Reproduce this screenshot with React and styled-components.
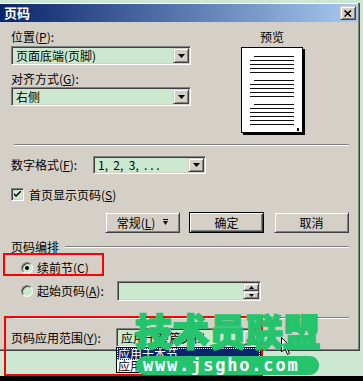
import styled, { createGlobalStyle, css } from "styled-components";

const FIELD = "#cce8cf";

const GlobalStyle = createGlobalStyle`
  html, body {
    margin: 0;
    padding: 0;
  }
  body {
    width: 363px;
    height: 381px;
    overflow: hidden;
    background: #cde8d2;
    font-family: "Noto Sans CJK SC", "Noto Sans", sans-serif;
    font-size: 12px;
    color: #000;
  }
`;

const raised = css`
  box-sizing: border-box;
  background: #d4d0c8;
  border: 1px solid;
  border-color: #d4d0c8 #404040 #404040 #d4d0c8;
  box-shadow: inset 1px 1px #fff, inset -1px -1px #808080;
`;

const sunken = css`
  box-sizing: border-box;
  border: 1px solid;
  border-color: #808080 #fff #fff #808080;
  box-shadow: inset 1px 1px #404040, inset -1px -1px #d4d0c8;
`;

const Page = styled.div`
  position: relative;
  width: 363px;
  height: 381px;
  box-sizing: border-box;
  padding-top: 3px;
  display: flex;
  flex-direction: column;
  background: #cde8d2;
`;

const Dialog = styled.div`
  width: 360px;
  height: 348px;
  box-sizing: border-box;
  padding: 1px 2px 2px 0;
  background: #d4d0c8;
  box-shadow: inset -1px -1px #404040, inset -2px -2px #808080, inset 0 1px #fff;
`;

const TitleBar = styled.div`
  height: 18px;
  display: flex;
  align-items: center;
  padding-left: 4px;
  background: linear-gradient(to right, #0a246a, #a6caf0);
  color: #fff;
  font-weight: bold;
  font-size: 13px;
  line-height: 14px;
`;

const CloseButton = styled.div`
  ${raised};
  margin-left: auto;
  margin-right: 2px;
  width: 16px;
  height: 14px;
  display: flex;
  align-items: center;
  justify-content: center;
`;

const Body = styled.div`
  padding: 0 9px 0 11px;
`;

const TopSection = styled.div`
  height: 122px;
  display: flex;
`;

const LeftCol = styled.div`
  width: 180px;
  display: flex;
  flex-direction: column;
`;

const Label = styled.span`
  display: block;
  height: 14px;
  line-height: 14px;
  white-space: nowrap;
  margin-top: ${(p) => p.$mt || 0}px;
  width: ${(p) => (p.$w ? `${p.$w}px` : "auto")};
  flex-shrink: 0;
`;

const Field = styled.div`
  ${sunken};
  width: ${(p) => p.$w}px;
  height: ${(p) => p.$h || 19}px;
  margin-top: ${(p) => p.$mt || 0}px;
  padding: 1px;
  display: flex;
  background: ${FIELD};
  flex-shrink: 0;
`;

const FieldText = styled.span`
  flex: 1;
  padding-left: 3px;
  display: flex;
  align-items: center;
  white-space: pre;
  overflow: hidden;
  line-height: 14px;
`;

const DropButton = styled.div`
  ${raised};
  width: 16px;
  display: flex;
  align-items: center;
  justify-content: center;
`;

const SpinBox = styled.div`
  width: 16px;
  display: flex;
  flex-direction: column;
`;

const SpinButton = styled.div`
  ${raised};
  flex: 1;
  display: flex;
  align-items: center;
  justify-content: center;
`;

const PreviewCol = styled.div`
  margin-left: 50px;
  display: flex;
  flex-direction: column;
`;

const PreviewLabel = styled(Label)`
  width: 62px;
  text-align: center;
`;

const PreviewPage = styled.div`
  position: relative;
  margin-top: 3px;
  width: 62px;
  height: 86px;
  box-sizing: border-box;
  background: #fff;
  border: 1px solid #000;
  box-shadow: 2px 2px 0 #000;
  padding: 8px 0 0 8px;
  display: flex;
  flex-direction: column;
  gap: 7px;
`;

const Paragraph = styled.div`
  display: flex;
  flex-direction: column;
  gap: 3px;
`;

const TextLine = styled.div`
  height: 1px;
  background: #111;
  width: ${(p) => (p.$first ? 40 : 44)}px;
  margin-left: ${(p) => (p.$first ? 4 : 0)}px;
`;

const PageNumber = styled.div`
  position: absolute;
  left: 55px;
  top: 80px;
  width: 2px;
  height: 3px;
  background: #000;
`;

const Separator = styled.div`
  margin-left: 3px;
  margin-top: ${(p) => p.$mt || 0}px;
  height: 0;
  border-top: 1px solid #808080;
  border-bottom: 1px solid #fff;
`;

const Row = styled.div`
  display: flex;
  align-items: center;
  margin-top: ${(p) => p.$mt || 0}px;
  height: ${(p) => p.$h}px;
  padding-left: ${(p) => p.$pl || 0}px;
  gap: ${(p) => p.$gap || 0}px;
`;

const Checkbox = styled.div`
  ${sunken};
  width: 13px;
  height: 13px;
  background: ${FIELD};
  display: flex;
  align-items: center;
  justify-content: center;
`;

const Radio = styled.div`
  box-sizing: border-box;
  width: 12px;
  height: 12px;
  border-radius: 50%;
  border: 1px solid;
  border-color: #808080 #fff #fff #808080;
  box-shadow: inset 1px 1px #404040;
  background: ${FIELD};
  display: flex;
  align-items: center;
  justify-content: center;
  flex-shrink: 0;
`;

const RadioDot = styled.div`
  width: 4px;
  height: 4px;
  border-radius: 50%;
  background: #000;
`;

const ButtonRow = styled.div`
  display: flex;
  justify-content: flex-end;
  margin-top: 11px;
  height: 21px;
`;

const Button = styled.div`
  ${raised};
  width: 75px;
  height: 21px;
  margin-left: ${(p) => p.$ml || 0}px;
  display: flex;
  align-items: center;
  justify-content: center;
  gap: 8px;
  line-height: 14px;
  ${(p) =>
    p.$default &&
    css`
      border: 1px solid #000;
      box-shadow: inset 1px 1px #fff, inset -1px -1px #404040, inset -2px -2px #808080;
    `}
`;

const GroupHeader = styled.div`
  display: flex;
  align-items: center;
  margin-top: 7px;
  height: 14px;
`;

const GroupRule = styled.div`
  flex: 1;
  margin-left: 6px;
  height: 0;
  border-top: 1px solid #808080;
  border-bottom: 1px solid #fff;
`;

const Spacer = styled.div`
  flex: 1;
`;

const BottomBar = styled.div`
  height: 5px;
  background: #000;
`;

const DropList = styled.div`
  position: absolute;
  left: 116px;
  top: 347px;
  width: 145px;
  height: 26px;
  box-sizing: border-box;
  border: 1px solid #000;
  background: #fff;
  display: flex;
  flex-direction: column;
`;

const ListItem = styled.div`
  height: 12px;
  line-height: 12px;
  padding-left: 1px;
  white-space: nowrap;
  box-sizing: border-box;
  ${(p) =>
    p.$selected &&
    css`
      background: #0a246a;
      color: #fff;
      outline: 1px dotted #fff;
      outline-offset: -1px;
    `}
`;

const Highlight = styled.div`
  position: absolute;
  left: ${(p) => p.$x}px;
  top: ${(p) => p.$y}px;
  width: ${(p) => p.$w}px;
  height: ${(p) => p.$h}px;
  box-sizing: border-box;
  border: 2px solid #ff0000;
`;

const Cursor = styled.svg`
  position: absolute;
  left: 281px;
  top: 337px;
`;

const Watermark = styled.div`
  position: absolute;
  left: 135px;
  top: 309px;
  font-family: "Noto Sans CJK SC", sans-serif;
  font-weight: 900;
  font-size: 37px;
  line-height: 42px;
  color: #25c46c;
  -webkit-text-stroke: 1.6px #25c46c;
  white-space: nowrap;
`;

const WatermarkPill = styled.div`
  position: absolute;
  left: 136px;
  top: 356px;
  width: 183px;
  height: 19px;
  border-radius: 9px;
  background: #25c46c;
  color: #fff;
  font-family: "DejaVu Sans Mono", monospace;
  font-weight: bold;
  font-size: 17px;
  line-height: 19px;
  letter-spacing: 1.8px;
  padding-left: 7px;
  box-sizing: border-box;
  white-space: nowrap;
`;

const Arrow = () => (
  <svg width="7" height="4" viewBox="0 0 7 4">
    <polygon points="0,0 7,0 3.5,4" fill="#000" />
  </svg>
);

const SmallArrow = ({ up }) => (
  <svg width="5" height="3" viewBox="0 0 5 3">
    <polygon points={up ? "2.5,0 5,3 0,3" : "0,0 5,0 2.5,3"} fill="#000" />
  </svg>
);

const paragraphs = [5, 5, 6];

export default function App() {
  return (
    <>
      <GlobalStyle />
      <Page>
        <Dialog>
          <TitleBar>
            页码
            <CloseButton>
              <svg width="8" height="7" viewBox="0 0 8 7">
                <path d="M0.5 0.5 L7 6.5 M7 0.5 L0.5 6.5" stroke="#000" strokeWidth="1.5" />
              </svg>
            </CloseButton>
          </TitleBar>
          <Body>
            <TopSection>
              <LeftCol>
                <Label $mt={8}>
                  位置(<u>P</u>):
                </Label>
                <Field $w={180} $mt={2}>
                  <FieldText>页面底端(页脚)</FieldText>
                  <DropButton>
                    <Arrow />
                  </DropButton>
                </Field>
                <Label $mt={7}>
                  对齐方式(<u>G</u>):
                </Label>
                <Field $w={180} $mt={1}>
                  <FieldText>右侧</FieldText>
                  <DropButton>
                    <Arrow />
                  </DropButton>
                </Field>
              </LeftCol>
              <PreviewCol>
                <PreviewLabel $mt={8}>预览</PreviewLabel>
                <PreviewPage>
                  {paragraphs.map((n, i) => (
                    <Paragraph key={i}>
                      {Array.from({ length: n }).map((_, j) => (
                        <TextLine key={j} $first={j === 0} />
                      ))}
                    </Paragraph>
                  ))}
                  <PageNumber />
                </PreviewPage>
              </PreviewCol>
            </TopSection>

            <Separator />

            <Row $mt={10} $h={18}>
              <Label $w={82}>
                数字格式(<u>F</u>):
              </Label>
              <Field $w={113} $h={18}>
                <FieldText>{"1,  2,  3,  . . ."}</FieldText>
                <DropButton>
                  <Arrow />
                </DropButton>
              </Field>
            </Row>

            <Row $mt={14} $h={13} $gap={5}>
              <Checkbox>
                <svg width="7" height="7" viewBox="0 0 7 7">
                  <path d="M0 2 L0 4 L2 6 L7 1 L7 -1 L2 4 Z" fill="#000" />
                </svg>
              </Checkbox>
              <Label>
                首页显示页码(<u>S</u>)
              </Label>
            </Row>

            <ButtonRow>
              <Button>
                <span>
                  常规(<u>L</u>)
                </span>
                <svg width="5" height="7" viewBox="0 0 5 7">
                  <rect x="0" y="0" width="5" height="1" fill="#000" />
                  <polygon points="0,2 5,2 2.5,6" fill="#000" />
                </svg>
              </Button>
              <Button $default $ml={9}>
                确定
              </Button>
              <Button $ml={10}>取消</Button>
            </ButtonRow>

            <GroupHeader>
              <Label>页码编排</Label>
              <GroupRule />
            </GroupHeader>

            <Row $mt={7} $h={14} $pl={10} $gap={4}>
              <Radio>
                <RadioDot />
              </Radio>
              <Label>
                续前节(<u>C</u>)
              </Label>
            </Row>

            <Row $mt={6} $h={20} $pl={10} $gap={4}>
              <Radio />
              <Label $w={76}>
                起始页码(<u>A</u>):
              </Label>
              <Field $w={144} $h={20}>
                <FieldText />
                <SpinBox>
                  <SpinButton>
                    <SmallArrow up />
                  </SpinButton>
                  <SpinButton>
                    <SmallArrow />
                  </SpinButton>
                </SpinBox>
              </Field>
            </Row>

            <Separator $mt={16} />

            <Row $mt={9} $h={19}>
              <Label $w={105}>
                页码应用范围(<u>Y</u>):
              </Label>
              <Field $w={145}>
                <FieldText>应用于整篇文档</FieldText>
                <DropButton>
                  <Arrow />
                </DropButton>
              </Field>
            </Row>
          </Body>
        </Dialog>
        <Spacer />
        <BottomBar />

        <DropList>
          <ListItem $selected>应用于本节</ListItem>
          <ListItem>应用于整篇文档</ListItem>
        </DropList>

        <Highlight $x={3} $y={253} $w={101} $h={23} />
        <Highlight $x={4} $y={316} $w={259} $h={60} />

        <Cursor width="12" height="19" viewBox="0 0 12 19">
          <polygon points="0.5,0.5 0.5,15 4,11.5 6.5,17.5 8.5,16.5 6,11 10.5,11" fill="#fff" stroke="#000" />
        </Cursor>

        <Watermark>技术员联盟</Watermark>
        <WatermarkPill>www.jsgho.com</WatermarkPill>
      </Page>
    </>
  );
}
